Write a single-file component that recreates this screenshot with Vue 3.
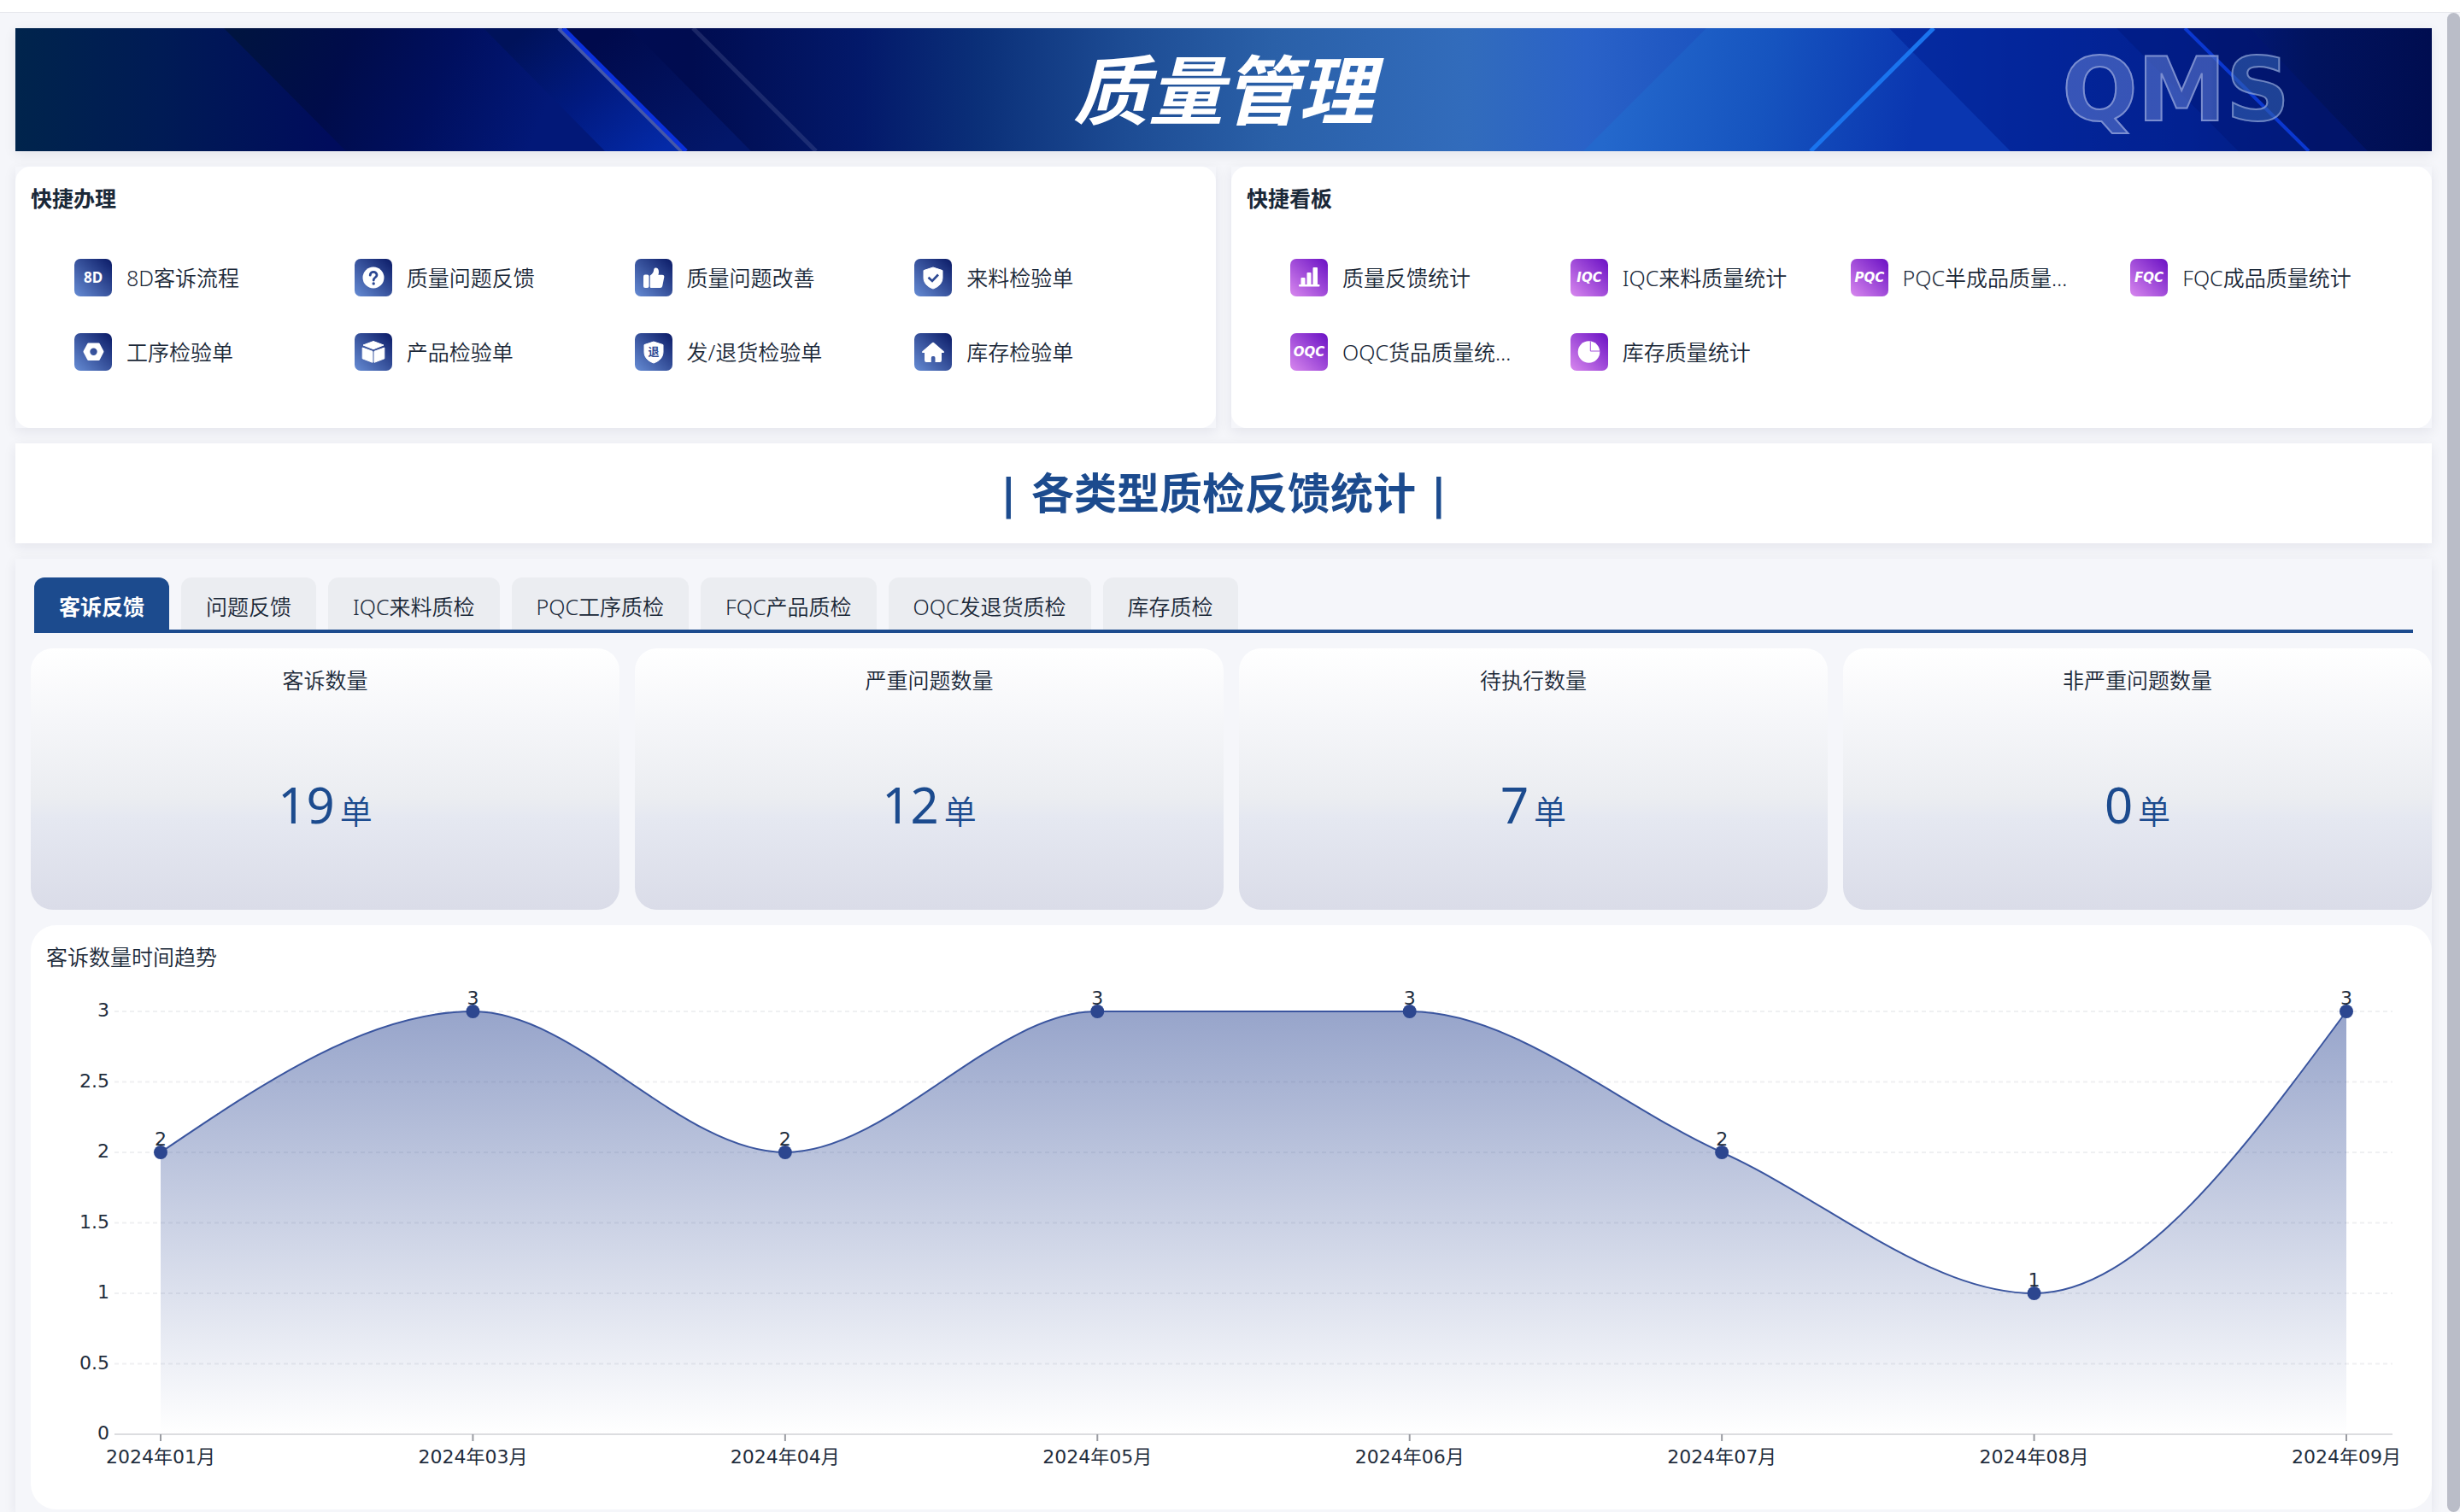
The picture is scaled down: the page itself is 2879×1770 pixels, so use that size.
<template>
  <div class="page">
    <div class="topbar"></div>
    <div class="body">
      <main class="main">
        <header class="banner">
          <svg class="banner-bg" viewBox="0 0 2828 144" preserveAspectRatio="none" aria-hidden="true">
            <defs>
              <linearGradient id="base" x1="0" y1="0" x2="1" y2="0">
                <stop offset="0" stop-color="#00244c" />
                <stop offset="0.06" stop-color="#001b55" />
                <stop offset="0.13" stop-color="#000c5c" />
                <stop offset="0.28" stop-color="#000c50" />
                <stop offset="0.35" stop-color="#03196a" />
                <stop offset="0.4" stop-color="#0b3079" />
                <stop offset="0.46" stop-color="#1d4c94" />
                <stop offset="0.52" stop-color="#2a60a8" />
                <stop offset="0.6" stop-color="#326cbc" />
                <stop offset="0.65" stop-color="#2a62c8" />
                <stop offset="0.7" stop-color="#1c54c0" />
                <stop offset="0.77" stop-color="#0b38b0" />
                <stop offset="0.84" stop-color="#03269a" />
                <stop offset="0.9" stop-color="#021c84" />
                <stop offset="0.95" stop-color="#01135e" />
                <stop offset="1" stop-color="#000d50" />
              </linearGradient>
              <linearGradient id="left" gradientUnits="userSpaceOnUse" x1="260" y1="0" x2="600" y2="144">
                <stop offset="0" stop-color="#001440" />
                <stop offset="0.35" stop-color="#000c4a" />
                <stop offset="0.65" stop-color="#000f5e" />
                <stop offset="1" stop-color="#021878" />
              </linearGradient>
              <linearGradient id="glow" gradientUnits="userSpaceOnUse" x1="600" y1="0" x2="740" y2="160">
                <stop offset="0" stop-color="#00125a" />
                <stop offset="0.5" stop-color="#011a80" />
                <stop offset="1" stop-color="#042aa8" />
              </linearGradient>
              <linearGradient id="dusk" gradientUnits="userSpaceOnUse" x1="700" y1="0" x2="820" y2="144">
                <stop offset="0" stop-color="#000a4c" />
                <stop offset="1" stop-color="#03176a" />
              </linearGradient>
              <linearGradient id="sky" gradientUnits="userSpaceOnUse" x1="1880" y1="0" x2="2230" y2="60">
                <stop offset="0" stop-color="#2468cc" />
                <stop offset="0.5" stop-color="#1654bf" />
                <stop offset="1" stop-color="#0a36b0" />
              </linearGradient>
            </defs>
            <rect width="2828" height="144" fill="url(#base)" />
            <path d="M244 0H550L694 144H387z" fill="url(#left)" />
            <path d="M548 0H639L783 144H690z" fill="url(#glow)" />
            <path d="M639 0H719L861 144H783z" fill="url(#dusk)" />
            <path d="M1979 0H2193L2335 144H1835z" fill="url(#sky)" />
            <path d="M2193 0H2459L2602 144H2335z" fill="#03249a" opacity="0.6" />
            <path d="M2459 0H2539L2684 144H2602z" fill="#011c86" opacity="0.7" />
            <path d="M2539 0H2615L2753 144H2684z" fill="#011570" opacity="0.7" />
            <path d="M636 0L780 144" stroke="#4658a8" stroke-width="5" />
            <path d="M641 0L785 144" stroke="#0b30dc" stroke-width="5" />
            <path d="M793 0L937 144" stroke="#8890c0" stroke-opacity="0.2" stroke-width="5" />
            <path d="M2245 0L2101 144" stroke="#1a74ee" stroke-width="5" />
            <path d="M2539 0L2684 144" stroke="#0b38d0" stroke-width="4" />
          </svg>
          <h1>质量管理</h1>
          <span class="qms">QMS</span>
        </header>

        <div class="quick">
          <section v-for="group in groups" :key="group.title" class="quick-box">
            <div class="quick-card">
              <h2>{{ group.title }}</h2>
              <nav class="links">
                <a v-for="item in group.items" :key="item.name" href="#" class="link">
                  <svg class="icon" viewBox="0 0 44 44" aria-hidden="true">
                    <defs>
                      <linearGradient :id="'g-' + item.icon" x1="0" y1="1" x2="1" y2="0">
                        <stop offset="0" :stop-color="group.from" />
                        <stop offset="1" :stop-color="group.to" />
                      </linearGradient>
                    </defs>
                    <rect width="44" height="44" rx="7" :fill="`url(#g-${item.icon})`" />
                    <text v-if="item.mark" x="22" :y="item.icon === 'd8' ? 28 : 27" :class="item.icon === 'd8' ? 'mark' : 'mark wide'">{{ item.mark }}</text>
                    <g v-else-if="item.icon === 'question'">
                      <circle cx="22" cy="22" r="12.5" fill="#fff" />
                      <path d="M18.2 19.2C18.2 14.2 26 14.2 26 19C26 21.8 22.2 21.8 22.2 25" fill="none" stroke="#2c4893" stroke-width="2.8" stroke-linecap="round" />
                      <circle cx="22.2" cy="29" r="1.7" fill="#2c4893" />
                    </g>
                    <g v-else-if="item.icon === 'thumb'" fill="#fff">
                      <rect x="10" y="18.500" width="6.500" height="15.500" rx="2" />
                      <path d="M17.800 19.500C21 17.500 21.800 15.500 22.300 12.200C22.700 9.600 28 9.400 28 15.200C28 16.800 27.700 17.800 27.400 18.800H32C33.800 18.800 34.600 20 34.300 21.500L32.300 31.500C32 33.200 31 34 29.500 34H19.500C18.400 34 17.800 33.400 17.800 32.400z" />
                    </g>
                    <g v-else-if="item.icon === 'check'">
                      <path d="M22 10L33 13.600V22C33 28.500 28.500 32.700 22 35C15.500 32.700 11 28.500 11 22V13.600z" fill="#fff" stroke="#fff" stroke-linejoin="round" />
                      <path d="M16.500 21.800L21 26L28 18.500" fill="none" stroke="#2c4893" stroke-width="2.6" />
                    </g>
                    <path v-else-if="item.icon === 'nut'" fill="#fff" fill-rule="evenodd" d="M16.500 11.500H28.500Q29.300 11.500 29.700 12.200L34.200 20.700Q34.700 21.600 34.200 22.500L29.700 31.200Q29.300 31.900 28.500 31.900H16.500Q15.700 31.900 15.300 31.200L10.700 22.500Q10.200 21.600 10.700 20.700L15.300 12.200Q15.700 11.500 16.500 11.500zM22.500 17.500A4.200 4.200 0 1 0 22.500 25.900A4.200 4.200 0 1 0 22.500 17.500z" />
                    <g v-else-if="item.icon === 'box'" fill="#fff" stroke="#fff" stroke-width="1" stroke-linejoin="round">
                      <path d="M22 9.500L34 14L22 18.800L10 14z" />
                      <path d="M9.200 17L21 21.300V34.300L9.200 29.800z" />
                      <path d="M34.800 17L23 21.300V34.300L34.800 29.800z" />
                    </g>
                    <g v-else-if="item.icon === 'return'">
                      <path d="M22 10L33 13.600V22C33 28.500 28.500 32.700 22 35C15.500 32.700 11 28.500 11 22V13.600z" fill="#fff" stroke="#fff" stroke-linejoin="round" />
                      <text x="22" y="26" class="seal">退</text>
                    </g>
                    <path v-else-if="item.icon === 'home'" fill="#fff" d="M20.900 11.200Q22 10.200 23.100 11.200L34.600 21.300Q35.800 23 34 23H32V31.500Q32 34 30 34H24.500V29Q24.500 27 22.800 27H21.500Q19.800 27 19.800 29V34H14Q12 34 12 31.500V23H10Q8.200 23 9.400 21.300z" />
                    <g v-else-if="item.icon === 'bars'" fill="#fff">
                      <rect x="12.500" y="22" width="5" height="9" rx="1" />
                      <rect x="19.500" y="16" width="5" height="15" rx="1" />
                      <rect x="26.500" y="10" width="5.500" height="21" rx="1" />
                      <rect x="10" y="30" width="24.500" height="2.600" rx="1" />
                    </g>
                    <g v-else-if="item.icon === 'pie'">
                      <circle cx="21.500" cy="22" r="12.800" fill="#fff" />
                      <path d="M23.300 9.500V21H34.500" fill="none" stroke="#a553dc" stroke-width="1" />
                    </g>
                  </svg>
                  <span class="link-name">{{ item.name }}</span>
                </a>
              </nav>
            </div>
          </section>
        </div>

        <section class="section-title">
          <h2>| 各类型质检反馈统计 |</h2>
        </section>

        <section class="panel">
          <div class="tabs" role="tablist">
            <button
              v-for="(tab, index) in tabs"
              :key="tab"
              type="button"
              role="tab"
              class="tab"
              :class="{ active: index === current }"
              :aria-selected="index === current"
              @click="current = index"
            >{{ tab }}</button>
          </div>

          <div class="stats">
            <div v-for="stat in stats" :key="stat.label" class="stat">
              <h3>{{ stat.label }}</h3>
              <p class="value">{{ stat.value }}<span class="unit">单</span></p>
            </div>
          </div>

          <div class="trend">
            <h3>客诉数量时间趋势</h3>
            <div ref="chartBox" class="chart">
              <svg :width="width" :height="628" role="img" aria-label="客诉数量时间趋势">
                <defs>
                  <linearGradient id="area" x1="0" y1="0" x2="0" y2="1">
                    <stop offset="0" stop-color="#2f4a96" stop-opacity="0.5" />
                    <stop offset="1" stop-color="#2f4a96" stop-opacity="0" />
                  </linearGradient>
                </defs>
                <g v-for="tick in yTicks" :key="tick">
                  <line v-if="tick > 0" :x1="left" :x2="right" :y1="yOf(tick)" :y2="yOf(tick)" class="grid" />
                  <text :x="left - 6" :y="yOf(tick) + 6" class="label end">{{ tick }}</text>
                </g>
                <line :x1="left" :x2="right" :y1="bottom" :y2="bottom" class="axis" />
                <path :d="areaPath" fill="url(#area)" />
                <path :d="linePath" class="line" />
                <g v-for="p in points" :key="p.month">
                  <line :x1="p.x" :x2="p.x" :y1="bottom" :y2="bottom + 8" class="tick" />
                  <text :x="p.x" :y="bottom + 34" class="label">{{ p.month }}</text>
                  <circle :cx="p.x" :cy="p.y" r="8" class="dot" />
                  <text :x="p.x" :y="p.y - 8" class="label">{{ p.value }}</text>
                </g>
              </svg>
            </div>
          </div>
        </section>
      </main>
      <div class="scrollbar"></div>
    </div>
  </div>
</template>

<script setup>
import { ref, computed, onMounted, onBeforeUnmount } from 'vue';

const groups = [
  {
    title: '快捷办理',
    from: '#668cd4',
    to: '#0a1a66',
    items: [
      { name: '8D客诉流程', icon: 'd8', mark: '8D' },
      { name: '质量问题反馈', icon: 'question' },
      { name: '质量问题改善', icon: 'thumb' },
      { name: '来料检验单', icon: 'check' },
      { name: '工序检验单', icon: 'nut' },
      { name: '产品检验单', icon: 'box' },
      { name: '发/退货检验单', icon: 'return' },
      { name: '库存检验单', icon: 'home' },
    ],
  },
  {
    title: '快捷看板',
    from: '#d888ee',
    to: '#6a10c4',
    items: [
      { name: '质量反馈统计', icon: 'bars' },
      { name: 'IQC来料质量统计', icon: 'iqc', mark: 'IQC' },
      { name: 'PQC半成品质量统计', icon: 'pqc', mark: 'PQC' },
      { name: 'FQC成品质量统计', icon: 'fqc', mark: 'FQC' },
      { name: 'OQC货品质量统计', icon: 'oqc', mark: 'OQC' },
      { name: '库存质量统计', icon: 'pie' },
    ],
  },
];

const tabs = ['客诉反馈', '问题反馈', 'IQC来料质检', 'PQC工序质检', 'FQC产品质检', 'OQC发退货质检', '库存质检'];
const current = ref(0);

const stats = [
  { label: '客诉数量', value: 19 },
  { label: '严重问题数量', value: 12 },
  { label: '待执行数量', value: 7 },
  { label: '非严重问题数量', value: 0 },
];

const trend = [
  { month: '2024年01月', value: 2 },
  { month: '2024年03月', value: 3 },
  { month: '2024年04月', value: 2 },
  { month: '2024年05月', value: 3 },
  { month: '2024年06月', value: 3 },
  { month: '2024年07月', value: 2 },
  { month: '2024年08月', value: 1 },
  { month: '2024年09月', value: 3 },
];
const yTicks = [0, 0.5, 1, 1.5, 2, 2.5, 3];

// chart area inside the svg
const left = 98;
const top = 45;
const bottom = 540;
const inset = 54;
const chartBox = ref(null);
const width = ref(1200);
const right = computed(() => width.value - 46);

const yOf = (v) => bottom - (v / 3) * (bottom - top);

const points = computed(() => {
  const step = (right.value - left - inset * 2) / (trend.length - 1);
  return trend.map((d, i) => ({ ...d, x: left + inset + step * i, y: yOf(d.value) }));
});

// monotone cubic: flat at every peak and valley, free at both ends
const linePath = computed(() => {
  const pts = points.value;
  const last = pts.length - 1;
  const step = pts[1].x - pts[0].x;
  const diff = pts.slice(1).map((p, i) => p.y - pts[i].y);
  const rise = pts.map((p, i) => {
    if (i === 0 || i === last) return 0;
    const a = diff[i - 1];
    const b = diff[i];
    if (a * b <= 0) return 0;
    return Math.sign(a) * 2 * Math.min(Math.abs(a), Math.abs(b), Math.abs(a + b) / 4);
  });
  rise[0] = (3 * diff[0] - rise[1]) / 2;
  rise[last] = (3 * diff[last - 1] - rise[last - 1]) / 2;

  let d = `M${pts[0].x} ${pts[0].y}`;
  for (let i = 1; i <= last; i++) {
    const a = pts[i - 1];
    const b = pts[i];
    d += `C${a.x + step / 3} ${a.y + rise[i - 1] / 3} ${b.x - step / 3} ${b.y - rise[i] / 3} ${b.x} ${b.y}`;
  }
  return d;
});

const areaPath = computed(() => {
  const pts = points.value;
  return `${linePath.value}V${bottom}H${pts[0].x}Z`;
});

const measure = () => {
  width.value = chartBox.value.clientWidth;
};

onMounted(() => {
  measure();
  window.addEventListener('resize', measure);
});

onBeforeUnmount(() => window.removeEventListener('resize', measure));
</script>

<style>
body {
  background: #f5f6fa;
}
</style>

<style scoped>
.page {
  display: flex;
  flex-direction: column;
  min-height: 100vh;
  font-family: "Noto Sans", "Noto Sans CJK SC", sans-serif;
  font-size: 25px;
  font-weight: 350;
  line-height: 38px;
  color: #1a2838;
}

h1,
h2,
h3,
p {
  margin: 0;
}

.topbar {
  height: 14px;
  background: #fff;
  border-bottom: 1px solid #e6e7ec;
}

.body {
  flex: 1;
  display: flex;
}

.main {
  flex: 1;
  min-width: 0;
  display: flex;
  flex-direction: column;
  gap: 18px;
  padding: 18px 18px 0;
}

.scrollbar {
  width: 15px;
  background: #babdc8;
  border-radius: 8px;
}

.banner {
  position: relative;
  display: grid;
  grid-template-columns: 1fr auto 1fr;
  align-items: center;
  height: 144px;
  box-shadow: 0 4px 14px rgba(20, 20, 60, 0.08);
}

.banner-bg {
  position: absolute;
  width: 100%;
  height: 100%;
}

.banner h1 {
  position: relative;
  grid-column: 2;
  font-size: 88px;
  line-height: 144px;
  font-style: italic;
  font-weight: bold;
  color: #fff;
}

.qms {
  position: relative;
  justify-self: end;
  margin-right: 166px;
  font-family: "DejaVu Sans", sans-serif;
  font-size: 104px;
  line-height: 144px;
  font-weight: bold;
  color: transparent;
  background: linear-gradient(90deg, rgba(84, 112, 200, 0.65) 65%, rgba(50, 96, 176, 0.6) 75%);
  background-clip: text;
  -webkit-text-stroke: 2px rgba(190, 200, 235, 0.5);
}

.quick {
  display: grid;
  grid-template-columns: 1fr 1fr;
  gap: 18px;
}

.quick-box {
  background: #f5f6fa;
  box-shadow: 0 4px 14px rgba(20, 20, 60, 0.08);
}

.quick-card {
  min-height: 306px;
  box-sizing: border-box;
  padding: 18px;
  border-radius: 18px;
  background: #fff;
}

.quick-card h2 {
  font-size: 25px;
  line-height: 38px;
}

.links {
  display: grid;
  grid-template-columns: repeat(4, 1fr);
  row-gap: 43px;
  padding: 52px 7px 0 51px;
}

.link {
  display: flex;
  align-items: center;
  gap: 17px;
  height: 44px;
  min-width: 0;
  padding-right: 64px;
  color: inherit;
  text-decoration: none;
}

.icon {
  flex: none;
  width: 44px;
  height: 44px;
}

.link-name {
  overflow: hidden;
  white-space: nowrap;
  text-overflow: ellipsis;
}

.mark {
  font-size: 17px;
  font-weight: bold;
  fill: #fff;
  text-anchor: middle;
}

.mark.wide {
  font-family: "DejaVu Sans", sans-serif;
  font-size: 15px;
  font-style: italic;
}

.seal {
  font-size: 13px;
  font-weight: bold;
  fill: #2c4893;
  text-anchor: middle;
}

.section-title {
  padding: 20px 0;
  background: #fff;
  text-align: center;
  box-shadow: 0 4px 14px rgba(20, 20, 60, 0.08);
}

.section-title h2 {
  font-size: 50px;
  line-height: 77px;
  color: #1c4b8e;
}

.panel {
  flex: 1;
  display: flex;
  flex-direction: column;
  gap: 18px;
  padding: 22px 0 3px 18px;
  background: #f5f6fa;
  box-shadow: 0 4px 14px rgba(20, 20, 60, 0.08);
}

.tabs {
  display: flex;
  gap: 14px;
  margin: 0 22px 0 4px;
  border-bottom: 4px solid #1c4b8e;
}

.tab {
  height: 61px;
  padding: 6px 29px 0;
  border: 0;
  border-radius: 12px 12px 0 0;
  background: #ebedf1;
  font: inherit;
  color: inherit;
  cursor: pointer;
}

.tab.active {
  background: #1c4b8e;
  color: #fff;
  font-weight: bold;
}

.stats {
  display: grid;
  grid-template-columns: repeat(4, 1fr);
  gap: 18px;
}

.stat {
  min-height: 306px;
  box-sizing: border-box;
  padding-top: 18px;
  border-radius: 26px;
  text-align: center;
  background: linear-gradient(#fff 0%, #f5f6f9 28%, #ebedf1 57%, #e5e8f1 65%, #dadce8 100%);
}

.stat h3,
.trend h3 {
  font-size: 25px;
  line-height: 38px;
  font-weight: 350;
}

.value {
  margin-top: 97px;
  font-size: 58px;
  font-weight: normal;
  line-height: 60px;
  color: #1c4b8e;
}

.unit {
  margin-left: 6px;
  font-size: 38px;
  font-weight: 350;
  line-height: 38px;
}

.trend {
  padding-top: 18px;
  border-radius: 30px;
  background: #fff;
}

.trend h3 {
  padding: 0 18px;
}

.chart svg {
  display: block;
}

.grid {
  stroke: #eff0f2;
  stroke-width: 2;
  stroke-dasharray: 5 4;
}

.axis {
  stroke: #dcdde0;
  stroke-width: 2;
}

.tick {
  stroke: #9a9ca2;
  stroke-width: 2;
}

.line {
  fill: none;
  stroke: #3a559f;
  stroke-width: 2;
}

.dot {
  fill: #2c468f;
}

.label {
  font-family: "DejaVu Sans", "Noto Sans CJK SC", sans-serif;
  font-size: 22px;
  font-weight: normal;
  fill: #1f2d3d;
  text-anchor: middle;
}

.label.end {
  text-anchor: end;
}
</style>
